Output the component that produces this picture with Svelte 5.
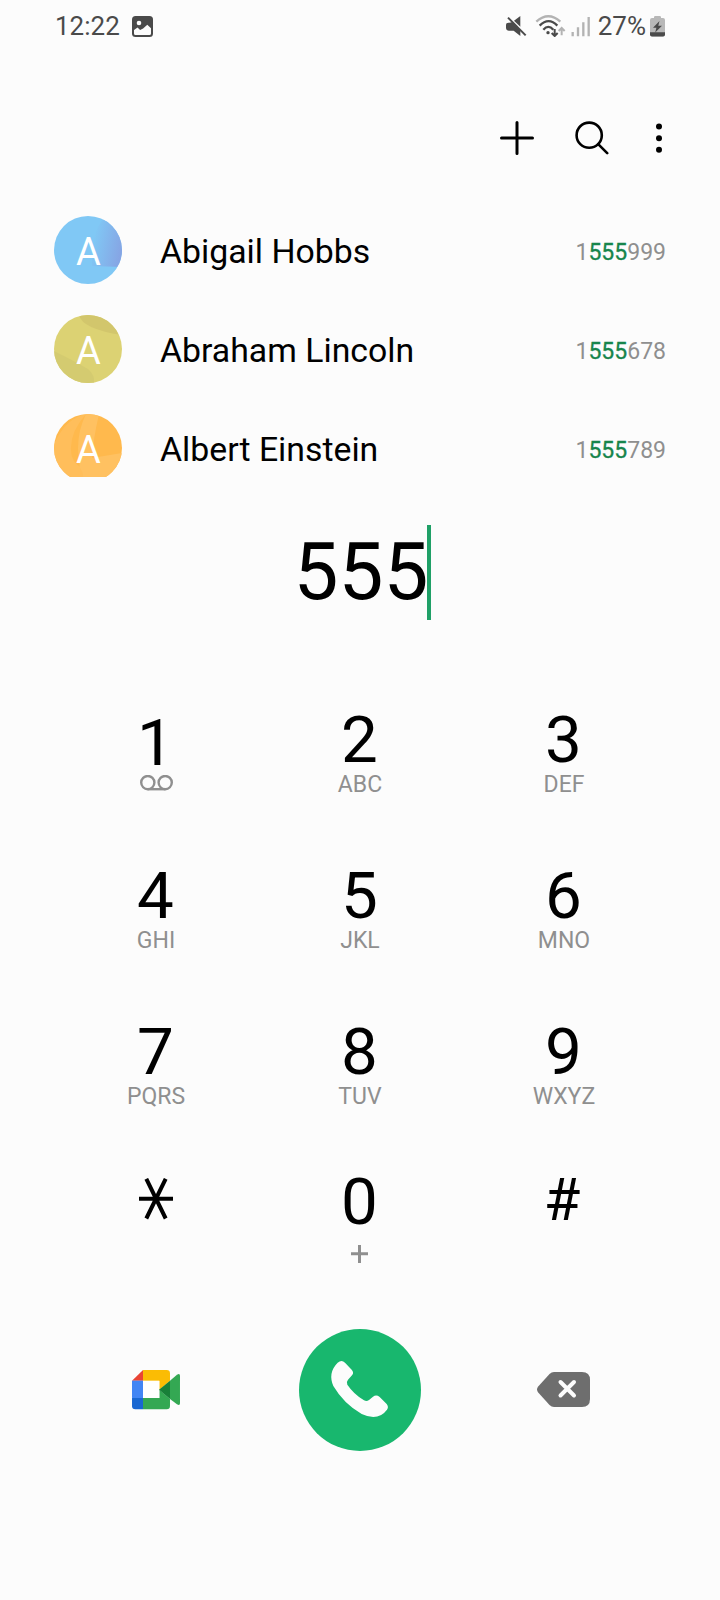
<script>
  let dialed = '555';

  const contacts = [
    { name: 'Abigail Hobbs', number: '1555999', theme: 'blue' },
    { name: 'Abraham Lincoln', number: '1555678', theme: 'olive' },
    { name: 'Albert Einstein', number: '1555789', theme: 'orange' }
  ];

  const keys = [
    { digit: '1', icon: 'voicemail' },
    { digit: '2', label: 'ABC' },
    { digit: '3', label: 'DEF' },
    { digit: '4', label: 'GHI' },
    { digit: '5', label: 'JKL' },
    { digit: '6', label: 'MNO' },
    { digit: '7', label: 'PQRS' },
    { digit: '8', label: 'TUV' },
    { digit: '9', label: 'WXYZ' },
    { digit: '*', icon: 'star' },
    { digit: '0', icon: 'plus' },
    { digit: '#' }
  ];

  // split a number around the dialed digits so the match can be coloured
  function splitNumber(number) {
    const i = number.indexOf(dialed);
    if (i < 0) return [number, '', ''];
    return [number.slice(0, i), dialed, number.slice(i + dialed.length)];
  }

  function press(digit) {
    dialed += digit;
  }

  function backspace() {
    dialed = dialed.slice(0, -1);
  }
</script>

<main>
  <header class="status">
    <div class="status-left">
      <span>12:22</span>
      <svg width="21" height="21" viewBox="0 0 21 21">
        <rect width="21" height="21" rx="3.5" fill="#4a4a4a" />
        <circle cx="7" cy="7" r="2.3" fill="#fcfcfc" />
        <path d="M2 17.500V14l3.500-2.500 2.600 2.500 3-1.500L15.300 8.800l3.700 3.400v5.300q0 1.500-1.500 1.500h-14Q2 19 2 17.500z" fill="#fcfcfc" />
      </svg>
    </div>
    <div class="status-right">
      <svg width="94" height="22" viewBox="42 44 282 66" fill="none">
        <path d="M49 68l13-2 4-1 20 21 2 4v17L68 91H54q-8 0-9-8v-9q0-6 4-6z" fill="#4a4a4a" />
        <path d="M69 61l19-14v32z" fill="#4a4a4a" />
        <path d="M51 52l53 53" stroke="#4a4a4a" stroke-width="6" />
        <path d="M136 64q36-32 72 0" stroke="#b3b3b3" stroke-width="7" />
        <path d="M146 76q27-27 53 0M157 88q15-17 30 0" stroke="#4a4a4a" stroke-width="7" />
        <circle cx="171" cy="97" r="5" fill="#4a4a4a" />
        <path d="M191 86v21M182 98l9 9 9-9" stroke="#4a4a4a" stroke-width="6" />
        <path d="M212 105V83M203 92l9-9 9 9" stroke="#b3b3b3" stroke-width="6" />
        <path d="M245 95v13M261 81v27M277 66v42M293 50v58" stroke="#b3b3b3" stroke-width="7" />
      </svg>
      <span>27%</span>
      <svg class="battery" width="15" height="21" viewBox="0 0 15 21">
        <path d="M4 2V1.200Q4 0 5.200 0h4.600Q11 0 11 1.200V2h2q2 0 2 2v14.500q0 2-2 2H2q-2 0-2-2V4q0-2 2-2z" fill="#b8b8b8" />
        <path d="M0 16.300h15v2.200q0 2-2 2H2q-2 0-2-2z" fill="#4a4a4a" />
        <path d="M9.500 5L3 11.800h3.400L5.200 16.500l6.800-6.800H8.300z" fill="#4a4a4a" />
      </svg>
    </div>
  </header>

  <nav class="toolbar">
    <button aria-label="Add">
      <svg width="34" height="34" viewBox="0 0 34 34">
        <path d="M17 1.500v31M1.500 17h31" />
      </svg>
    </button>
    <button class="search" aria-label="Search">
      <svg width="34" height="34" viewBox="0 0 34 34">
        <circle cx="14.200" cy="14.200" r="12.600" />
        <path d="M23.200 23.200l9 9" />
      </svg>
    </button>
    <button aria-label="More">
      <svg class="dots" width="6" height="30" viewBox="0 0 6 30">
        <circle cx="3" cy="3.500" r="3" />
        <circle cx="3" cy="15.200" r="3" />
        <circle cx="3" cy="26.800" r="3" />
      </svg>
    </button>
  </nav>

  <section class="contacts">
    {#each contacts as contact}
      {@const parts = splitNumber(contact.number)}
      <div class="contact">
        <div class="avatar {contact.theme}">
          <svg width="68" height="68" viewBox="0 0 68 68">
            {#if contact.theme === 'blue'}
              <defs>
                <linearGradient id="sky" x1="0.1" y1="0.3" x2="1" y2="0.6">
                  <stop offset="0" stop-color="#80c8f5" />
                  <stop offset="1" stop-color="#86a5e4" />
                </linearGradient>
              </defs>
              <path d="M52 0C42 10 37 24 38 50l30 1V0z" fill="url(#sky)" />
            {:else if contact.theme === 'olive'}
              <path d="M25 0q3 14 43 20V0z" fill="#d2c66c" />
              <path d="M0 36q24 12 34 18 7 6 6 14H0z" fill="#d4cb70" />
            {:else}
              <path d="M0 68V30Q12 4 32 0 16 18 17 36q0 12 11 18 3 6 1 14z" fill="#ffbe5b" />
              <path d="M32 0h13Q39 26 38 44l30-5v29H28q3-8-2-14-6-30 6-54z" fill="#ffc161" />
            {/if}
          </svg>
          <span>{contact.name[0]}</span>
        </div>
        <div class="name">{contact.name}</div>
        <div class="number">{parts[0]}<b>{parts[1]}</b>{parts[2]}</div>
      </div>
    {/each}
  </section>

  <section class="display">
    <span>{dialed}</span>
    <i class="cursor"></i>
  </section>

  <section class="keypad">
    {#each keys as key}
      <button class="key" class:one={key.digit === '1'} class:hash={key.digit === '#'} on:click={() => press(key.digit)}>
        {#if key.icon === 'star'}
          <svg class="star" width="34" height="42" viewBox="0 0 34 42">
            <path d="M0 20.700h34M7.300.800l19.400 39.700M26.700.800L7.300 40.500" />
          </svg>
        {:else}
          <span class="digit">{key.digit}</span>
        {/if}
        {#if key.label}
          <span class="label">{key.label}</span>
        {/if}
        {#if key.icon === 'voicemail'}
          <svg class="voicemail" width="33" height="16" viewBox="0 0 33 16">
            <circle cx="7.800" cy="7.600" r="6.600" />
            <circle cx="25.200" cy="7.600" r="6.600" />
            <path d="M7.800 14.200h17.400" />
          </svg>
        {:else if key.icon === 'plus'}
          <svg class="plus" width="17" height="18" viewBox="0 0 17 18">
            <path d="M8.500 0v18M0 8.700h17" />
          </svg>
        {/if}
      </button>
    {/each}
  </section>

  <footer class="actions">
    <button aria-label="Video call">
      <svg width="48" height="39.300" viewBox="66 90 144 118">
        <path d="M66 122l33-32v32z" fill="#e94435" />
        <path d="M99 90h71q10 0 10 10v22l-32 27v-26H99z" fill="#fbbc04" />
        <path d="M66 122h33v52H66z" fill="#4285f4" />
        <path d="M66 174h33v34H76q-10 0-10-10z" fill="#1967d2" />
        <path d="M99 174h49v-25l32 28v21q0 10-10 10H99z" fill="#34a853" />
        <path d="M180 122l21-18q9-5 9 3v83q0 8-9 3l-21-16z" fill="#34a853" />
        <path d="M99 122h49v52H99z" fill="#fff" />
        <path d="M147 149l33-27v55z" fill="#188038" />
      </svg>
    </button>
    <button class="call" aria-label="Call">
      <svg width="122" height="122" viewBox="57 57 366 366">
        <path d="M173 158q12-10 22 0l20 21q8 9 1 17l-12 13q-6 7-2 15 19 28 50 47 8 5 15-1l12-10q10-7 20 1l21 21q7 9 1 17-27 36-76 13-54-31-85-84-17-40 13-70z" fill="#fcfcfc" />
      </svg>
    </button>
    <button class="delete" aria-label="Delete" on:click={backspace}>
      <svg width="53" height="35" viewBox="0 0 53 35">
        <path d="M17 0h28q8 0 8 8v19q0 8-8 8H17q-2.500 0-4.500-2L1.200 20.500q-2.400-3 0-6L12.500 2Q14.500 0 17 0z" fill="#6e6e6e" />
        <path d="M23.500 10l13.500 13.500M37 10L23.500 23.500" stroke="#fcfcfc" stroke-width="4" stroke-linecap="round" />
      </svg>
    </button>
  </footer>
</main>

<style>
  :global(body) {
    margin: 0;
    background: #fcfcfc;
  }

  main {
    width: 720px;
    height: 1600px;
    overflow: hidden;
    background: #fcfcfc;
    font-family: Roboto, 'Liberation Sans', sans-serif;
    color: #000;
  }

  svg {
    display: block;
  }

  button {
    padding: 0;
    border: none;
    background: none;
    font: inherit;
    color: inherit;
    cursor: pointer;
  }

  .status {
    display: flex;
    justify-content: space-between;
    height: 52px;
    padding: 0 54px 0 55px;
    box-sizing: border-box;
    font-size: 26px;
    line-height: 52px;
    color: #4a4a4a;
  }

  .status-left,
  .status-right {
    display: flex;
    align-items: center;
  }

  .status-left {
    gap: 12px;
  }

  .status-right {
    padding-right: 1px;
  }

  .status-right span {
    margin-left: -1px;
  }

  .battery {
    margin-left: 4px;
  }

  .toolbar {
    display: flex;
    justify-content: flex-end;
    align-items: center;
    height: 72px;
    margin-top: 50px;
    padding-right: 58px;
  }

  .toolbar svg {
    fill: none;
    stroke: #000;
    stroke-width: 3;
    stroke-linecap: round;
  }

  .toolbar .dots {
    fill: #000;
    stroke: none;
  }

  .toolbar .search {
    margin: 0 47.5px 0 41px;
  }

  .toolbar .search svg {
    stroke-width: 2.6;
  }

  .contacts {
    height: 261px;
    margin-top: 42px;
    overflow: hidden;
  }

  .contact {
    display: flex;
    align-items: center;
    height: 68px;
    margin-bottom: 31px;
    padding: 0 54px;
  }

  .avatar {
    position: relative;
    width: 68px;
    height: 68px;
    border-radius: 50%;
    overflow: hidden;
  }

  .avatar span {
    position: absolute;
    inset: 0;
    padding-left: 1px;
    font-size: 38px;
    line-height: 73px;
    text-align: center;
    color: #fff;
  }

  .blue {
    background: #80c8f5;
  }

  .olive {
    background: #dcd273;
  }

  .orange {
    background: #ffb94d;
  }

  .name {
    flex: 1;
    margin-left: 38px;
    padding-top: 4px;
    font-size: 33.8px;
    line-height: 68px;
  }

  .number {
    padding-top: 6px;
    font-size: 23px;
    line-height: 68px;
    color: #8f8f8f;
  }

  .number b {
    font-weight: 400;
    color: #17854c;
    -webkit-text-stroke: 0.3px #17854c;
  }

  .display {
    display: flex;
    justify-content: center;
    align-items: center;
    height: 95px;
    margin-top: 48px;
    padding-left: 5px;
    font-size: 80px;
    line-height: 95px;
  }

  .cursor {
    width: 4px;
    height: 95px;
    margin-left: -1px;
    background: #1fa067;
  }

  .keypad {
    display: grid;
    grid-template-columns: repeat(3, 204px);
    grid-template-rows: 156px 156px 150px 150px;
    justify-content: center;
    margin-top: 87px;
  }

  .key {
    display: flex;
    flex-direction: column;
    align-items: center;
  }

  .digit {
    padding: 0 1px 1px 0;
    font-size: 65.5px;
    line-height: 65px;
  }

  .one .digit {
    margin-top: 3px;
  }

  .hash .digit {
    margin: 1px 3px 0 0;
    font-size: 59.5px;
    line-height: 61px;
  }

  .label {
    font-size: 23px;
    line-height: 24px;
    color: #8f8f8f;
  }

  .voicemail,
  .plus,
  .star {
    fill: none;
    stroke: #8f8f8f;
    stroke-width: 2.4;
  }

  .voicemail {
    margin-top: -1px;
  }

  .plus {
    margin: 10px 1px 0 0;
    stroke-width: 3;
  }

  .star {
    margin-top: 9px;
    stroke: #000;
    stroke-width: 4;
  }

  .actions {
    display: grid;
    grid-template-columns: repeat(3, 204px);
    justify-content: center;
    align-items: center;
    height: 122px;
    margin-top: 10px;
  }

  .actions button {
    justify-self: center;
  }

  .actions .delete {
    padding: 0 1px 2px 0;
  }

  .call {
    border-radius: 50%;
    background: #18b76e;
  }
</style>
